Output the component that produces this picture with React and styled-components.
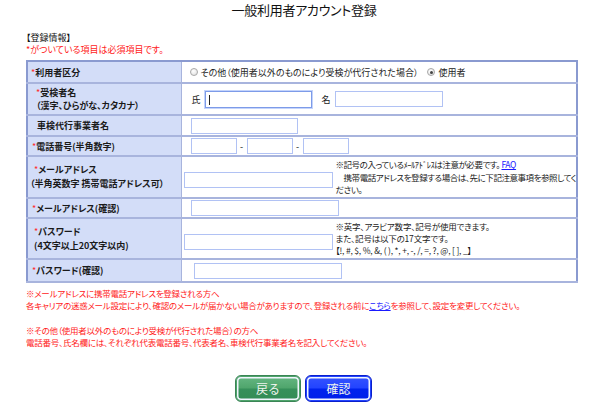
import React from 'react';
import styled, { createGlobalStyle } from 'styled-components';

const GlobalStyle = createGlobalStyle`
  html, body {
    margin: 0;
    padding: 0;
    background: #ffffff;
  }
  body {
    font-family: 'Noto Sans CJK JP', 'Noto Sans', sans-serif;
    font-feature-settings: 'palt';
    color: #111;
  }
`;

const Page = styled.div`
  width: 600px;
  height: 408px;
  box-sizing: border-box;
  padding: 0 22px 0 26px;
  overflow: hidden;
`;

const Title = styled.h1`
  margin: 0;
  height: 20px;
  line-height: 20px;
  text-align: center;
  font-size: 13px;
  font-weight: normal;
  letter-spacing: -0.3px;
  padding-left: 4px;
`;

const Section = styled.div`
  margin-top: 12px;
`;

const Note = styled.div`
  color: ${(p) => (p.$red ? '#ff1a1a' : '#111')};
  font-size: ${(p) => p.$size || 9}px;
  letter-spacing: ${(p) => p.$ls || 0}px;
  line-height: ${(p) => p.$lh || 12}px;
  white-space: nowrap;
`;

const Gap = styled.div`
  height: ${(p) => p.$h}px;
`;

const Table = styled.table`
  margin-top: 4px;
  width: 552px;
  table-layout: fixed;
  border-collapse: collapse;
  border: 2px solid #8a9ad0;
  font-size: 9px;
`;

const Row = styled.tr`
  height: ${(p) => p.$h}px;
`;

const Head = styled.th`
  width: 154px;
  box-sizing: border-box;
  background: #d3ddf8;
  border: 1px solid #a8b4dd;
  border-bottom-width: 2px;
  text-align: left;
  font-weight: bold;
  font-size: 9px;
  line-height: ${(p) => p.$lh || 13}px;
  padding: 0 0 0 ${(p) => p.$indent || 3}px;
  color: #1a1a1a;
  vertical-align: middle;
  white-space: nowrap;
`;

const Sub = styled.div`
  padding-left: ${(p) => p.$indent || 0}px;
`;

const Star = styled.span`
  color: #ff2a2a;
  font-weight: normal;
`;

const Cell = styled.td`
  border: 1px solid #a8b4dd;
  border-bottom-width: 2px;
  padding: 0 1px 0 ${(p) => p.$pad || 9}px;
  vertical-align: middle;
  overflow: hidden;
`;

const Line = styled.div`
  display: flex;
  align-items: center;
`;

const Field = styled.input`
  box-sizing: border-box;
  width: ${(p) => p.$w}px;
  height: ${(p) => p.$h || 16}px;
  margin: 0 ${(p) => p.$mr || 0}px 0 ${(p) => p.$ml || 0}px;
  padding: 0 3px;
  border: 1px solid ${(p) => (p.$focus ? '#7d9be8' : '#b1c2f4')};
  box-shadow: ${(p) => (p.$focus ? '0 0 0 1px #c4d4fb' : 'none')};
  background: #fff;
  font-size: 9px;
  outline: none;
  flex-shrink: 0;
`;

const Caret = styled.span`
  position: relative;
  display: inline-block;
  width: 0;
  height: 17px;
  &::after {
    content: '';
    position: absolute;
    left: -${(p) => p.$offset}px;
    top: 4px;
    width: 1px;
    height: 10px;
    background: #222;
  }
`;

const Label = styled.span`
  font-size: 9px;
  color: #222;
  white-space: nowrap;
  margin-left: ${(p) => p.$ml || 0}px;
`;

const Radio = styled.span`
  display: inline-block;
  box-sizing: border-box;
  width: 8px;
  height: 8px;
  border-radius: 50%;
  border: 1px solid #a9a9a9;
  background: radial-gradient(circle at 40% 35%, #ffffff 0%, #dcdcdc 100%);
  margin: 0 3px 0 ${(p) => p.$ml || 0}px;
  position: relative;
  flex-shrink: 0;
  &::after {
    content: '';
    display: ${(p) => (p.$checked ? 'block' : 'none')};
    position: absolute;
    left: 1.5px;
    top: 1.5px;
    width: 3px;
    height: 3px;
    border-radius: 50%;
    background: #444;
  }
`;

const Dash = styled.span`
  width: 10px;
  text-align: center;
  font-size: 9px;
`;

const Hint = styled.div`
  font-size: 8.5px;
  letter-spacing: ${(p) => p.$ls || -0.2}px;
  line-height: ${(p) => p.$lh || 12}px;
  color: #1a1a1a;
  padding-left: 3px;
  white-space: nowrap;
  margin-top: ${(p) => p.$mt || 0}px;
`;

const Link = styled.a`
  color: #1a1aff;
  text-decoration: underline;
`;

const Buttons = styled.div`
  display: flex;
  justify-content: center;
  gap: 4px;
  margin-top: 27px;
  padding-left: 3px;
`;

const Btn = styled.button`
  box-sizing: border-box;
  width: ${(p) => p.$w}px;
  height: 27px;
  border-radius: 6px;
  border: 1px solid ${(p) => (p.$blue ? '#0a1fcc' : '#3b8556')};
  background: ${(p) =>
    p.$blue
      ? 'linear-gradient(#3654ff 0%, #2244ff 48%, #0022ee 52%, #0020e8 100%)'
      : 'linear-gradient(#66b783 0%, #4fa56c 48%, #36905a 52%, #338c55 100%)'};
  box-shadow: inset 0 0 0 1px ${(p) => (p.$blue ? '#2244ff' : '#4fa56c')},
    inset 0 0 0 2.5px #f2f6ff;
  color: #eef4ee;
  font-family: 'Noto Sans CJK JP', sans-serif;
  font-size: 12px;
  font-weight: normal;
  padding: 0;
  cursor: pointer;
`;

export default function App() {
  return (
    <>
      <GlobalStyle />
      <Page>
        <Title>一般利用者アカウント登録</Title>
        <Section>
          <Note>【登録情報】</Note>
          <Note $red>*がついている項目は必須項目です。</Note>
        </Section>
        <Table>
          <tbody>
            <Row $h={22}>
              <Head>
                <Star>*</Star>利用者区分
              </Head>
              <Cell $pad={8}>
                <Line>
                  <Radio />
                  <Label>その他（使用者以外のものにより受検が代行された場合）</Label>
                  <Radio $checked $ml={9} />
                  <Label>使用者</Label>
                </Line>
              </Cell>
            </Row>
            <Row $h={32}>
              <Head $indent={8}>
                <Star>*</Star>受検者名
                <Sub>（漢字、ひらがな、カタカナ）</Sub>
              </Head>
              <Cell $pad={10}>
                <Line>
                  <Label>氏</Label>
                  <Field $w={107} $h={17} $ml={4} $focus />
                  <Caret $offset={103} />
                  <Label $ml={10}>名</Label>
                  <Field $w={108} $ml={4} />
                </Line>
              </Cell>
            </Row>
            <Row $h={21}>
              <Head $indent={9}>車検代行事業者名</Head>
              <Cell $pad={9}>
                <Line>
                  <Field $w={107} />
                </Line>
              </Cell>
            </Row>
            <Row $h={20}>
              <Head $indent={4}>
                <Star>*</Star>電話番号(半角数字)
              </Head>
              <Cell $pad={9}>
                <Line>
                  <Field $w={46} />
                  <Dash>-</Dash>
                  <Field $w={46} />
                  <Dash>-</Dash>
                  <Field $w={46} />
                </Line>
              </Cell>
            </Row>
            <Row $h={42}>
              <Head $indent={2} $lh={14}>
                <Sub $indent={4}>
                  <Star>*</Star>メールアドレス
                </Sub>
                <Sub>（半角英数字 携帯電話アドレス可）</Sub>
              </Head>
              <Cell $pad={2}>
                <Line>
                  <Field $w={149} style={{ marginTop: 6 }} />
                  <Hint $lh={12.5} $ls={-0.45}>
                    ※記号の入っているﾒｰﾙｱﾄﾞﾚｽは注意が必要です。 <Link href="#">FAQ</Link>
                    <br />
                    {'\u3000携帯電話アドレスを登録する場合は、先に下記注意事項を参照してく'}
                    <br />
                    ださい。
                  </Hint>
                </Line>
              </Cell>
            </Row>
            <Row $h={20}>
              <Head $indent={4}>
                <Star>*</Star>メールアドレス(確認)
              </Head>
              <Cell $pad={9}>
                <Line>
                  <Field $w={148} />
                </Line>
              </Cell>
            </Row>
            <Row $h={41}>
              <Head $indent={6} $lh={14}>
                <Star>*</Star>パスワード
                <Sub>(4文字以上20文字以内)</Sub>
              </Head>
              <Cell $pad={2}>
                <Line>
                  <Field $w={149} style={{ marginTop: 6 }} />
                  <Hint $lh={12} $mt={-2}>
                    ※英字、アラビア数字、記号が使用できます。
                    <br />
                    また、記号は以下の17文字です。
                    <br />
                    【!, #, $, %, &amp;, ( ), *, +, -, /, =, ?, @, [ ], _】
                  </Hint>
                </Line>
              </Cell>
            </Row>
            <Row $h={23}>
              <Head $indent={4}>
                <Star>*</Star>パスワード(確認)
              </Head>
              <Cell $pad={12}>
                <Line>
                  <Field $w={148} />
                </Line>
              </Cell>
            </Row>
          </tbody>
        </Table>
        <Gap $h={4} />
        <Note $red $size={8.5} $ls={-0.25}>
          ※メールアドレスに携帯電話アドレスを登録される方へ
        </Note>
        <Note $red $size={8.5} $ls={-0.25}>
          各キャリアの迷惑メール設定により、確認のメールが届かない場合がありますので、登録される前に
          <Link href="#">こちら</Link>を参照して、設定を変更してください。
        </Note>
        <Gap $h={13} />
        <Note $red $size={8.5} $ls={-0.25}>
          ※その他（使用者以外のものにより受検が代行された場合）の方へ
        </Note>
        <Note $red $size={8.5} $ls={-0.25}>
          電話番号、氏名欄には、それぞれ代表電話番号、代表者名、車検代行事業者名を記入してください。
        </Note>
        <Buttons>
          <Btn $w={66}>戻る</Btn>
          <Btn $w={67} $blue>
            確認
          </Btn>
        </Buttons>
      </Page>
    </>
  );
}
